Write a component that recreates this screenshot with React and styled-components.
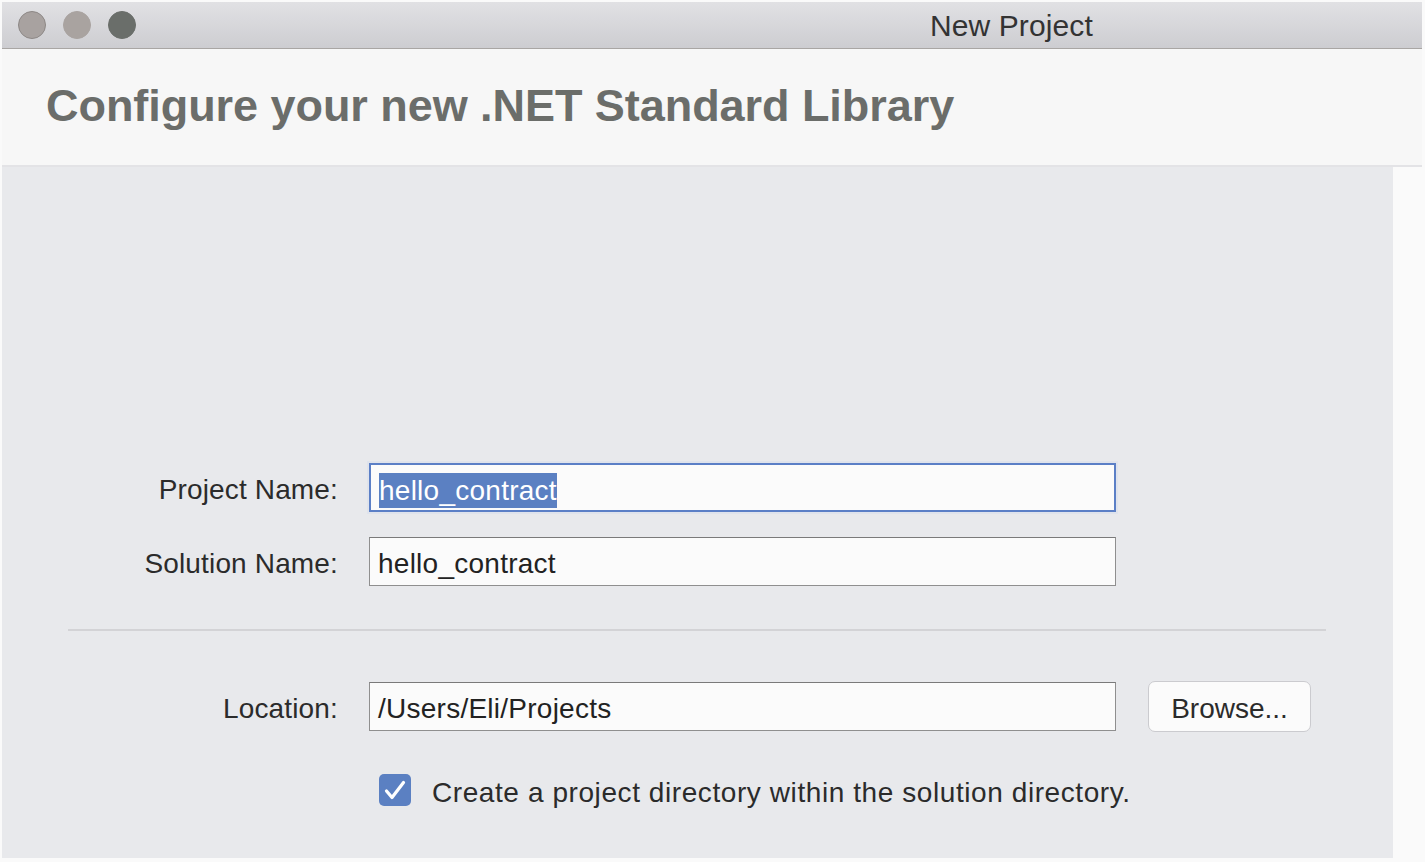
import styled, { createGlobalStyle } from 'styled-components';

const GlobalStyle = createGlobalStyle`
  html, body {
    margin: 0;
    padding: 0;
    background: #fafafa;
  }
  body {
    font-family: "Liberation Sans", Arial, sans-serif;
  }
`;

const Window = styled.div`
  width: 1420px;
  height: 856px;
  margin: 2px 0 0 2px;
  display: flex;
  flex-direction: column;
`;

const TitleBar = styled.div`
  height: 46px;
  display: flex;
  align-items: center;
  padding-left: 16px;
  background: linear-gradient(#e1e1e4, #cdcdd1);
  border-bottom: 1px solid #a9a6a4;
`;

const Light = styled.div`
  width: 28px;
  height: 28px;
  border-radius: 50%;
  margin-right: 17px;
  background: ${(p) => p.$color};
  box-sizing: border-box;
  border: 1px solid ${(p) => p.$edge || p.$color};
`;

const WindowTitle = styled.div`
  margin-left: 777px;
  padding-top: 2px;
  font-size: 30px;
  color: #333;
  letter-spacing: 0.1px;
`;

const Header = styled.div`
  height: 118px;
  box-sizing: border-box;
  padding: 31px 0 0 44px;
  background: #f7f7f7;
  border-bottom: 2px solid #e3e3e6;
`;

const Heading = styled.h1`
  margin: 0;
  font-size: 45px;
  font-weight: bold;
  color: #6b6d6a;
  letter-spacing: -0.05px;
`;

const Main = styled.div`
  flex: 1;
  display: flex;
`;

const Content = styled.div`
  width: 1391px;
  background: #e8e9ec;
  padding-top: 296px;
  box-sizing: border-box;
`;

const Row = styled.div`
  display: grid;
  grid-template-columns: 336px 747px 164px;
  column-gap: 31px;
  align-items: center;
  margin-bottom: ${(p) => p.$gap || 0}px;
`;

const Label = styled.label`
  padding-top: 5px;
  text-align: right;
  font-size: 28px;
  color: #2b2b2b;
  letter-spacing: 0.15px;
`;

const Field = styled.div`
  height: 49px;
  box-sizing: border-box;
  display: flex;
  align-items: center;
  padding: 5px 0 0 8px;
  background: #fbfbfb;
  border: ${(p) => (p.$focused ? '2px solid #5b7fc6' : '1.5px solid #8f8f8f')};
  border-top-color: ${(p) => (p.$focused ? '#5b7fc6' : '#7a7a7a')};
  box-shadow: ${(p) => (p.$focused ? '0 0 0 2px #dfe3ec' : 'none')};
  font-size: 28px;
  color: #222;
  letter-spacing: 0.25px;
`;

const Selected = styled.span`
  background: #5b80c2;
  color: #fff;
  padding: 2px 0 1px;
`;

const Button = styled.button`
  height: 51px;
  margin-left: 1px;
  padding: 4px 0 0;
  border: 1.5px solid #cbcbcf;
  border-radius: 7px;
  background: #fbfbfb;
  font-family: inherit;
  font-size: 28px;
  color: #2b2b2b;
`;

const Divider = styled.hr`
  margin: 0 66px 50px;
  width: 1258px;
  border: none;
  border-top: 2px solid #d3d3d6;
`;

const CheckRow = styled.div`
  display: flex;
  align-items: center;
  margin: 39px 0 0 377px;
  gap: 21px;
  font-size: 28px;
  color: #2b2b2b;
  letter-spacing: 0.58px;
`;

const CheckText = styled.span`
  padding-top: 6px;
`;

const Checkbox = styled.div`
  width: 32px;
  height: 32px;
  border-radius: 5px;
  background: #5b80c2;
  display: flex;
  align-items: center;
  justify-content: center;
`;

const Side = styled.div`
  flex: 1;
  background: #fafafa;
`;

export default function App() {
  return (
    <>
      <GlobalStyle />
      <Window>
        <TitleBar>
          <Light $color="#a8a2a0" $edge="#8d8886" />
          <Light $color="#a9a3a0" />
          <Light $color="#6a6e6a" />
          <WindowTitle>New Project</WindowTitle>
        </TitleBar>
        <Header>
          <Heading>Configure your new .NET Standard Library</Heading>
        </Header>
        <Main>
          <Content>
            <Row $gap={25}>
              <Label>Project Name:</Label>
              <Field $focused>
                <Selected>hello_contract</Selected>
              </Field>
            </Row>
            <Row $gap={43}>
              <Label>Solution Name:</Label>
              <Field>hello_contract</Field>
            </Row>
            <Divider />
            <Row>
              <Label>Location:</Label>
              <Field>/Users/Eli/Projects</Field>
              <Button>Browse...</Button>
            </Row>
            <CheckRow>
              <Checkbox>
                <svg width="24" height="22" viewBox="0 0 24 22" fill="none">
                  <path d="M3.5 12 L9 18.5 L20.5 3.5" stroke="#fff" strokeWidth="3.2" strokeLinecap="round" strokeLinejoin="round" />
                </svg>
              </Checkbox>
              <CheckText>Create a project directory within the solution directory.</CheckText>
            </CheckRow>
          </Content>
          <Side />
        </Main>
      </Window>
    </>
  );
}
